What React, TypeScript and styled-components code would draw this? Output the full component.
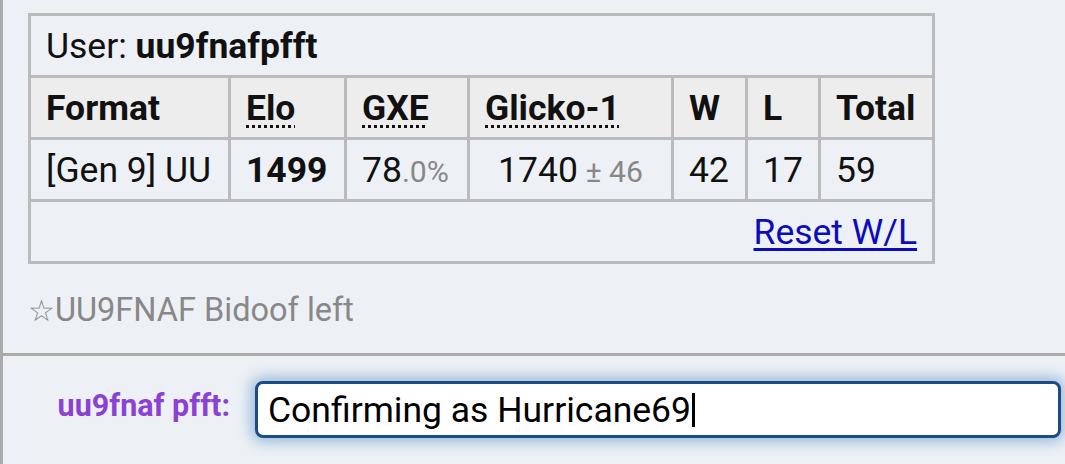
import React from 'react'
import styled, { createGlobalStyle } from 'styled-components'

const Global = createGlobalStyle`
  html, body {
    margin: 0;
    padding: 0;
    background: #edf1f5;
    font-family: Roboto, "Liberation Sans", sans-serif;
  }
`

const Room = styled.div`
  height: 464px;
  display: flex;
  flex-direction: column;
  border-left: 3px solid #aaaaaa;
  box-sizing: border-box;
`

const Log = styled.div`
  padding: 13px 0 0 25px;
  height: 353px;
  box-sizing: border-box;
`

const Ladder = styled.table`
  border-collapse: collapse;
  table-layout: fixed;
  width: 906px;
  border: 3px solid #bbbbbb;
  font-size: 35.5px;
  color: #111;
`

const Cell = styled.td<{ $center?: boolean; $right?: boolean }>`
  border: 3px solid #bbbbbb;
  height: 59px;
  padding: 0 0 0 ${p => (p.$center ? 0 : 15)}px;
  vertical-align: middle;
  white-space: nowrap;
  text-align: ${p => (p.$center ? 'center' : p.$right ? 'right' : 'left')};
  ${p => p.$right && 'padding-right: 15px;'}
`

const Head = styled.th`
  border: 3px solid #bbbbbb;
  height: 59px;
  padding: 0 0 0 15px;
  text-align: left;
  font-weight: 700;
  background: #ededed;
  white-space: nowrap;
`

const Abbr = styled.abbr`
  text-decoration: underline dotted;
  text-decoration-thickness: 3px;
  text-underline-offset: 5px;
  cursor: help;
`

const Small = styled.small`
  font-size: 0.85em;
  color: #888;
`

const Link = styled.a`
  color: #0c0cbd;
  text-decoration: underline;
  text-underline-offset: 4px;
`

const Notice = styled.div`
  margin-top: 27px;
  font-size: 32.5px;
  color: #888;
`

const Star = styled.span`
  font-family: "DejaVu Sans", sans-serif;
  font-size: 30px;
`

const Divider = styled.div`
  height: 3px;
  background: #aaaaaa;
  margin-left: -3px;
`

const Chatbox = styled.div`
  flex: 1;
  display: flex;
  align-items: flex-start;
  padding-top: 25px;
`

const Name = styled.label`
  width: 227px;
  text-align: right;
  font-size: 30.5px;
  font-weight: 700;
  color: #8b42d2;
  padding-top: 7px;
  flex-shrink: 0;
`

const Input = styled.div`
  margin-left: 25px;
  width: 806px;
  height: 57px;
  box-sizing: border-box;
  border: 3px solid #1b4c82;
  border-radius: 8px;
  background: #fff;
  box-shadow: 0 0 14px 4px rgba(70, 130, 200, 0.5);
  font-size: 35.5px;
  color: #000;
  padding: 0 0 0 10px;
  display: flex;
  align-items: center;
`

const Caret = styled.span`
  display: inline-block;
  width: 3px;
  height: 34px;
  background: #000;
  margin-left: 1px;
`

export default function App() {
  return (
    <>
      <Global />
      <Room>
        <Log>
          <Ladder>
            <colgroup>
              <col style={{ width: 200 }} />
              <col style={{ width: 116 }} />
              <col style={{ width: 123 }} />
              <col style={{ width: 204 }} />
              <col style={{ width: 74 }} />
              <col style={{ width: 73 }} />
              <col style={{ width: 114 }} />
            </colgroup>
            <tbody>
              <tr>
                <Cell colSpan={7}>
                  User: <strong>uu9fnafpfft</strong>
                </Cell>
              </tr>
              <tr>
                <Head>Format</Head>
                <Head><Abbr title="Elo rating">Elo</Abbr></Head>
                <Head><Abbr title="user's percentage chance of winning a random battle">GXE</Abbr></Head>
                <Head><Abbr title="Glicko-1 rating">Glicko-1</Abbr></Head>
                <Head>W</Head>
                <Head>L</Head>
                <Head>Total</Head>
              </tr>
              <tr>
                <Cell>[Gen 9] UU</Cell>
                <Cell><strong>1499</strong></Cell>
                <Cell>78<Small>.0%</Small></Cell>
                <Cell $center>1740<Small> ± 46</Small></Cell>
                <Cell>42</Cell>
                <Cell>17</Cell>
                <Cell>59</Cell>
              </tr>
              <tr>
                <Cell colSpan={7} $right>
                  <Link href="#">Reset W/L</Link>
                </Cell>
              </tr>
            </tbody>
          </Ladder>
          <Notice>
            <Star>☆</Star>UU9FNAF Bidoof left
          </Notice>
        </Log>
        <Divider />
        <Chatbox>
          <Name>uu9fnaf pfft:</Name>
          <Input>
            Confirming as Hurricane69<Caret />
          </Input>
        </Chatbox>
      </Room>
    </>
  )
}
